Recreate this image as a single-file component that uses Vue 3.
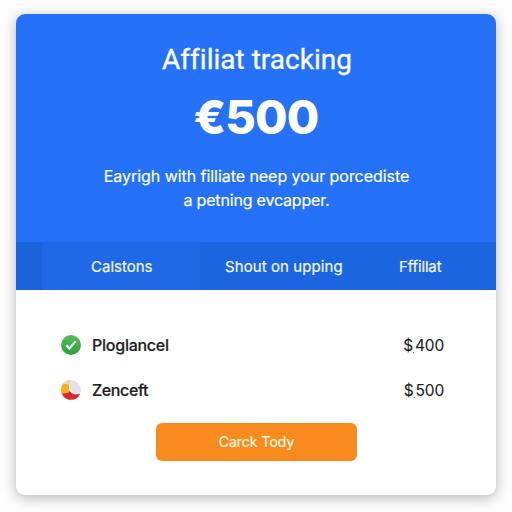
<script setup>
const tabs = [
  { label: 'Calstons', kind: 'first' },
  { label: 'Shout on upping', kind: 'second' },
  { label: 'Fffillat', kind: 'third' }
]
const rows = [
  { name: 'Ploglancel', amount: '400', icon: 'check' },
  { name: 'Zenceft', amount: '500', icon: 'pie' }
]
</script>

<template>
  <main class="page">
    <section class="card">
      <header class="hero">
        <h1 class="title"><span>Affiliat tracking</span></h1>
        <div class="price"><span>€500</span></div>
        <p class="lead"><span>Eayrigh with filliate neep your porcediste</span><span class="lead-end">a petning evcapper.</span></p>
      </header>
      <nav class="tabs">
        <div v-for="t in tabs" :key="t.label" class="tab" :class="t.kind"><span>{{ t.label }}</span></div>
      </nav>
      <div class="body">
        <div v-for="r in rows" :key="r.name" class="row">
          <svg v-if="r.icon === 'check'" class="icon" viewBox="0 0 20 20">
            <defs>
              <linearGradient id="green" x1="0" y1="0" x2="0" y2="1">
                <stop offset="0" stop-color="#58bd5c" />
                <stop offset="1" stop-color="#2b9f3c" />
              </linearGradient>
            </defs>
            <circle cx="10" cy="10" r="10" fill="url(#green)" />
            <path d="M5.3 10.2l3.2 3.2 6-7" fill="none" stroke="#fff" stroke-width="2.1" />
          </svg>
          <svg v-else class="icon" viewBox="0 0 20 20">
            <circle cx="10" cy="10" r="10" fill="#e5e3e8" />
            <path d="M8.4 .2A10 10 0 0 0 .9 14L8.6 12V4z" fill="#f5ae1c" />
            <path d="M8.4 .2A10 10 0 0 0 2.4 3.8L8.4 4.4z" fill="#ead8be" />
            <path d="M.8 13.8A10 10 0 0 0 19 14.2C15.5 14.8 11 13.6 8.8 11L7.2 12.8z" fill="#d8292b" />
            <path d="M8.4 3.6v6.2c1.2 2.5 3.6 3.9 6.4 4.2" fill="none" stroke="#fff" stroke-width=".8" />
          </svg>
          <span class="name" :class="r.icon">{{ r.name }}</span>
          <span class="amount"><span class="currency">$</span><i class="dot"></i><span>{{ r.amount }}</span></span>
        </div>
        <button class="cta"><span>Carck Tody</span></button>
      </div>
    </section>
  </main>
</template>

<style>
body { background: #fdfdfd; }
</style>

<style scoped>
.page {
  box-sizing: border-box;
  height: 512px;
  padding: 14px 16px 17px;
  overflow: hidden;
  font-family: Inter, "Liberation Sans", sans-serif;
  color: #1d1f24;
}
.card {
  height: 481px;
  border-radius: 9px;
  background: #fff;
  overflow: hidden;
  box-shadow: 0 3px 14px rgba(0, 0, 0, .28);
}
.hero {
  box-sizing: border-box;
  height: 228px;
  padding-top: 29px;
  background: #2572f8;
  color: #fff;
  text-align: center;
}
.title {
  margin: 0;
  padding-left: 2px;
  font-family: Roboto, sans-serif;
  font-size: 28px;
  line-height: 34px;
  font-weight: 400;
  letter-spacing: .01px;
  -webkit-text-stroke: .3px #fff;
}
.price {
  margin-top: 14px;
  font-size: 47px;
  line-height: 52px;
  font-weight: 800;
  letter-spacing: -.8px;
}
.lead {
  display: flex;
  flex-direction: column;
  align-items: center;
  margin: 21px 0 0;
  padding-left: 1px;
  font-size: 16px;
  line-height: 24px;
  letter-spacing: -.05px;
  -webkit-text-stroke: .2px #fff;
}
.lead-end { letter-spacing: -.18px; }
.tabs {
  display: grid;
  grid-template-columns: 184px 170px 126px;
  height: 48px;
  background: #1c65e0;
  color: #f2f7ff;
  font-size: 15px;
  line-height: 46px;
  -webkit-text-stroke: .2px #f2f7ff;
}
.tab {
  box-sizing: border-box;
  padding-top: 2px;
  white-space: nowrap;
}
.first {
  padding-left: 75px;
  background: linear-gradient(90deg, #1b63dc 26px, #1f69e6 26px);
}
.second { padding-left: 25px; letter-spacing: .08px; }
.third { padding-left: 29px; letter-spacing: -.15px; }
.body {
  display: flex;
  flex-direction: column;
  padding: 32px 52px 0 45px;
}
.row {
  display: flex;
  align-items: center;
  height: 45px;
}
.icon { width: 20px; height: 20px; }
.name {
  margin-left: 11px;
  font-size: 16px;
  font-weight: 500;
  letter-spacing: -.25px;
  -webkit-text-stroke: .2px #1d1f24;
}
.name.pie { letter-spacing: -.4px; }
.amount {
  display: flex;
  margin-left: auto;
  padding-top: 2px;
  font-size: 15.5px;
  letter-spacing: -.2px;
  -webkit-text-stroke: .15px #1d1f24;
}
.dot {
  align-self: flex-end;
  width: 1px;
  height: 1px;
  margin: 0 1px 2px 0;
  background: #777;
}
.cta {
  width: 201px;
  height: 38px;
  margin: 11px 0 0 95px;
  padding: 0;
  border: 0;
  border-radius: 6px;
  background: #f98b1e;
  color: #fffbe0;
  font: 400 14px/38px Inter, sans-serif;
  -webkit-text-stroke: .2px #fffbe0;
}
</style>
